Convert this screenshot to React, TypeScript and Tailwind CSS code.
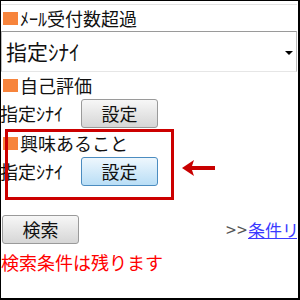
import React from 'react';

function Heading({ label }: { label: string }) {
  return (
    <div className="flex items-center h-[26px] leading-[26px]">
      <span className="inline-block w-[15px] h-[13px] bg-[#f7843c] ml-[2px] mr-[2px]" />
      <span className="text-[18px] text-[#111]">{label}</span>
    </div>
  );
}

function Button({ label, active }: { label: string; active?: boolean }) {
  const cls = active
    ? 'border-[#4b8cc0] bg-gradient-to-b from-[#eef7fd] to-[#b9def6]'
    : 'border-[#9a9a9a] bg-gradient-to-b from-[#f7f7f7] to-[#d6d6d6]';
  return (
    <button
      className={
        'w-[77px] h-[29px] rounded-[3px] border text-[18px] leading-[27px] text-[#111] text-center ' + cls
      }
    >
      {label}
    </button>
  );
}

export default function App() {
  return (
    <div
      className="relative w-[300px] h-[300px] overflow-hidden bg-white border-l border-t border-r-2 border-b-2 border-black"
      style={{ fontFamily: '"Noto Sans CJK JP", "Noto Sans", sans-serif' }}
    >
      <div className="h-[4px] w-[296px] border-b border-[#e3e3e3]" />
      <Heading label="ﾒｰﾙ受付数超過" />
      <div className="relative w-[296px] h-[41px] border border-[#bdbdbd] border-t-[#9a9a9a] border-b-[#e6e6e6] flex items-center pl-[4px]">
        <span className="text-[21px] text-[#111]">指定ｼﾅｲ</span>
        <span className="absolute right-[3px] top-[19px] w-0 h-0 border-l-[4px] border-r-[4px] border-t-[4px] border-l-transparent border-r-transparent border-t-black" />
      </div>
      <Heading label="自己評価" />
      <div className="flex items-center h-[31px]">
        <span className="w-[81px] text-[18px] text-[#111] -ml-[1px]">指定ｼﾅｲ</span>
        <Button label="設定" />
      </div>
      <div className="pt-[1px]">
        <Heading label="興味あること" />
      </div>
      <div className="flex items-center h-[31px]">
        <span className="w-[81px] text-[18px] text-[#111] -ml-[1px]">指定ｼﾅｲ</span>
        <Button label="設定" active />
      </div>
      <div className="h-[28px]" />
      <div className="flex items-center h-[29px]">
        <div className="ml-[1px]">
          <Button label="検索" />
        </div>
        <div className="ml-[147px] w-[71px] overflow-hidden whitespace-nowrap text-[18px]">
          <span className="text-[#555] tracking-[1px]">&gt;&gt;</span>
          <span className="text-[#3a3aff] underline text-[17px]">条件リセット</span>
        </div>
      </div>
      <div className="mt-[5px] text-[18px] leading-[26px] text-[#ff0000] whitespace-nowrap">検索条件は残ります</div>

      {/* annotation */}
      <div className="absolute left-[4px] top-[128px] w-[169px] h-[71px] border-[3px] border-[#cc0000]" />
      <svg className="absolute left-[181px] top-[159px]" width="34" height="16" viewBox="0 0 34 16">
        <path d="M0 8 L12 0 L10 6 L33 6 L33 10 L10 10 L12 16 Z" fill="#c80000" />
      </svg>
    </div>
  );
}
